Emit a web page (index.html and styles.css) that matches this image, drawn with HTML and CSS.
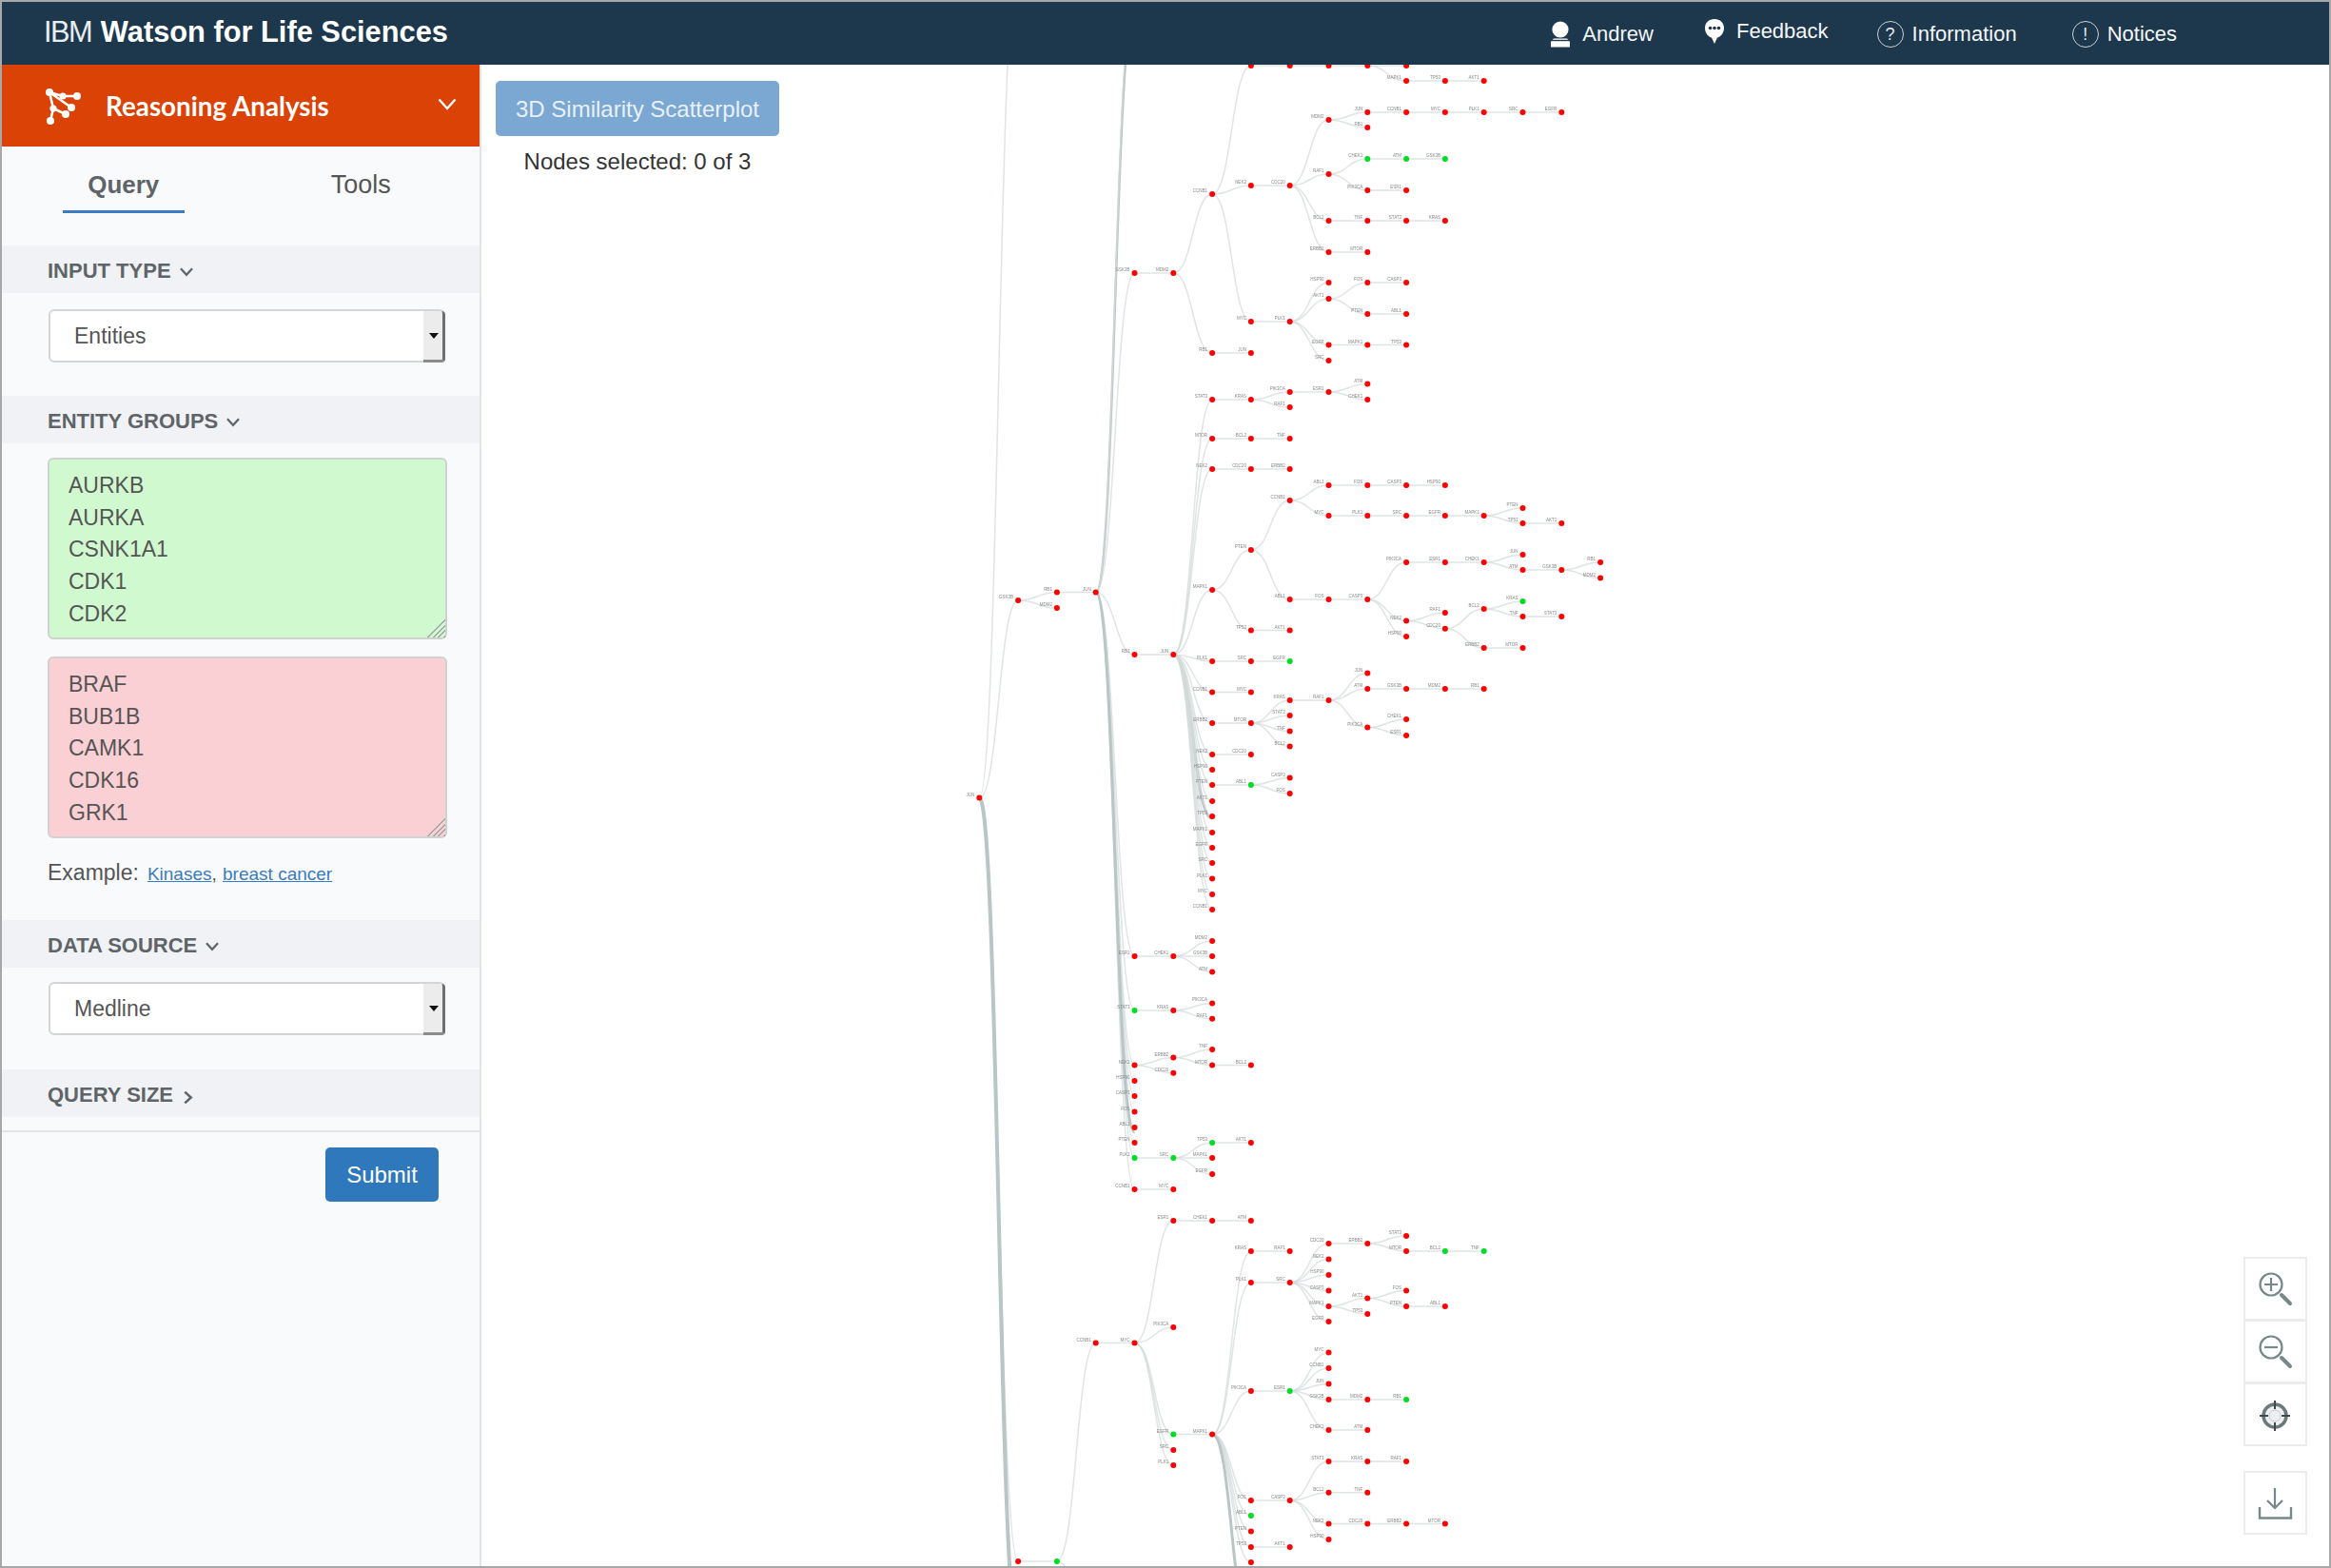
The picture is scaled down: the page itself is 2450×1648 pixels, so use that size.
FILE: index.html
```html
<!DOCTYPE html>
<html lang="en">
<head>
    <meta charset="UTF-8" />
    <title>IBM Watson for Life Sciences - Reasoning Analysis</title>
    <link rel="stylesheet" href="styles.css">
</head>
<body>
<div class="app">
    <header class="topbar">
        <div class="brand"><span class="brand-ibm">IBM</span> <strong>Watson for Life Sciences</strong></div>
        <nav class="topnav">
            <a class="topnav-item" href="#user">
                <svg class="user-icon" viewBox="0 0 22 28"><circle cx="11" cy="9" r="8.6" fill="#fff"/><path d="M4 18.5h14l3 3v6H1v-6z" fill="#fff"/><path d="M1 20.5h20" stroke="#1d374c" stroke-width="1.4"/></svg>
                Andrew
            </a>
            <a class="topnav-item topnav-up" href="#feedback">
                <svg class="bubble-icon" viewBox="0 0 22 28"><path d="M11 1C5 1 1 5 1 10.500S5 20 8 20.500L11 27l3-6.500c3-.5 7-4.500 7-10S17 1 11 1z" fill="#fff"/><circle cx="6.500" cy="10.500" r="1.800" fill="#1d374c"/><circle cx="11" cy="10.500" r="1.800" fill="#1d374c"/><circle cx="15.500" cy="10.500" r="1.800" fill="#1d374c"/></svg>
                Feedback
            </a>
            <a class="topnav-item" href="#info">
                <span class="round-icon">?</span>
                Information
            </a>
            <a class="topnav-item" href="#notices">
                <span class="round-icon">!</span>
                Notices
            </a>
        </nav>
    </header>

    <div class="main">
        <aside class="sidebar">
            <div class="module-head">
                <svg class="module-icon" viewBox="0 0 60 54">
                    <g stroke="#fff" stroke-width="2.600" fill="none"><path d="M16 12L30 16H45M16 12L39 28M16 12L20 29L17 42M20 29L33 35"/></g>
                    <g fill="#fff"><circle cx="16" cy="12" r="4"/><circle cx="30" cy="16" r="3.600"/><circle cx="45" cy="16" r="4"/><circle cx="39" cy="28" r="4"/><circle cx="20" cy="29" r="3.600"/><circle cx="33" cy="35" r="4"/><circle cx="17" cy="42" r="4"/></g>
                </svg>
                <span class="module-title">Reasoning Analysis</span>
                <svg class="module-chevron" viewBox="0 0 20 13"><path d="M1.500 1.500L10 11l8.500-9.500" fill="none" stroke="#fff" stroke-width="2.400"/></svg>
            </div>

            <div class="tabs">
                <div class="tab tab-active"><span>Query</span></div>
                <div class="tab"><span>Tools</span></div>
            </div>

            <div class="band">INPUT TYPE <svg class="band-chevron" viewBox="0 0 14 10"><path d="M1.500 2L7 8l5.500-6" fill="none" stroke="#5e6468" stroke-width="2"/></svg></div>
            <div class="select-row">
                <select class="picker"><option>Entities</option></select>
                <span class="picker-arrow"></span>
            </div>

            <div class="band">ENTITY GROUPS <svg class="band-chevron" viewBox="0 0 14 10"><path d="M1.500 2L7 8l5.500-6" fill="none" stroke="#5e6468" stroke-width="2"/></svg></div>
            <div class="groups">
                <div class="group-box">
                    <textarea class="group group-green" rows="5">AURKB
AURKA
CSNK1A1
CDK1
CDK2</textarea>
                    <span class="grip"></span>
                </div>
                <div class="group-box">
                    <textarea class="group group-red" rows="5">BRAF
BUB1B
CAMK1
CDK16
GRK1</textarea>
                    <span class="grip"></span>
                </div>
                <div class="example">Example: <span class="example-links"><a href="#kinases">Kinases</a>, <a href="#breast">breast cancer</a></span></div>
            </div>

            <div class="band">DATA SOURCE <svg class="band-chevron" viewBox="0 0 14 10"><path d="M1.500 2L7 8l5.500-6" fill="none" stroke="#5e6468" stroke-width="2"/></svg></div>
            <div class="select-row select-row-source">
                <select class="picker"><option>Medline</option></select>
                <span class="picker-arrow"></span>
            </div>

            <div class="band">QUERY SIZE <svg class="band-chevron-right" viewBox="0 0 10 14"><path d="M2 1.500L8 7l-6 5.500" fill="none" stroke="#5e6468" stroke-width="2.400"/></svg></div>

            <div class="submit-row">
                <button class="submit" type="button">Submit</button>
            </div>
        </aside>

        <section class="canvas">
            <svg id="tree" class="tree"></svg>

            <div class="canvas-top">
                <button class="scatter" type="button">3D Similarity Scatterplot</button>
                <div class="selected">Nodes selected: 0 of 3</div>
            </div>

            <div class="zoom-tools">
                <div class="tool">
                    <svg viewBox="0 0 67 66"><circle cx="29" cy="28" r="11.500"/><path d="M29 21v14M22 28h14"/><path class="tool-heavy" d="M40 39l9 9"/></svg>
                </div>
                <div class="tool">
                    <svg viewBox="0 0 67 66"><circle cx="29" cy="28" r="11.500"/><path d="M22 28h14"/><path class="tool-heavy" d="M40 39l9 9"/></svg>
                </div>
                <div class="tool">
                    <svg viewBox="0 0 67 66"><circle class="tool-ring" cx="33" cy="34" r="12"/><circle cx="33" cy="34" r="6" stroke="#c4cccc" stroke-width="1"/><path class="tool-dark" d="M33 18v9M33 41v9M17 34h9M40 34h9"/></svg>
                </div>
                <div class="tool tool-last">
                    <svg viewBox="0 0 67 66"><path d="M33 17v21M25 30l8 8 8-8"/><path d="M17 37v11.500h33V37" stroke-width="2.400"/></svg>
                </div>
            </div>
        </section>
    </div>
</div>
<script src="tree.js"></script>
</body>
</html>
```

FILE: styles.css
```css
* { box-sizing: border-box; }
html, body { margin: 0; height: 100%; }
body { font-family: "Liberation Sans", Arial, sans-serif; font-size: 23px; color: #555; background: #fff; }
a { text-decoration: none; color: inherit; }

.app { height: 100vh; display: flex; flex-direction: column; border: 2px solid #a8a8a8; overflow: hidden; }

/* top bar */
.topbar { flex: 0 0 66px; display: flex; align-items: center; justify-content: space-between; background: #1d374c; color: #fff; padding: 0 160px 2px 44px; }
.brand { font-size: 30.800px; }
.brand-ibm { font-weight: 400; color: #e8edf1; letter-spacing: -1.5px; margin-right: 1px; }
.topnav { display: flex; align-items: center; gap: 55px; margin-top: 4px; }
.topnav-item { display: flex; align-items: center; gap: 12px; font-size: 22px; color: #f4f6f8; }
.topnav-item:first-child { margin-right: -2px; }
.topnav-up { margin: -6px -4px 0 0; }
.topnav-item:last-child { margin-left: 3px; }
.user-icon { width: 22px; height: 28px; }
.bubble-icon { width: 22px; height: 28px; }
.round-icon { width: 28px; height: 28px; border: 1.500px solid #c9d2d9; border-radius: 50%; display: flex; align-items: center; justify-content: center; font-size: 18px; color: #e6ebef; margin-right: -3px; }

.main { flex: 1; display: flex; min-height: 0; }

/* left panel */
.sidebar { flex: 0 0 504px; background: #f9fafc; border-right: 2px solid #e3e4e6; display: flex; flex-direction: column; }
.module-head { flex: 0 0 86px; background: #da4206; display: flex; align-items: center; padding: 0 24px 0 34px; color: #fff; }
.module-icon { width: 60px; height: 54px; margin: 2px 15px 0 0; }
.module-title { flex: 1; font-family: Lato, "Liberation Sans", sans-serif; font-weight: 700; font-size: 27.800px; }
.module-chevron { width: 20px; height: 13px; margin-top: -4px; }

.tabs { flex: 0 0 104px; display: flex; padding-left: 3px; }
.tab { flex: 1; text-align: center; padding-top: 25px; font-size: 27px; color: #555; }
.tab span { display: inline-block; }
.tab-active { color: #5f6468; font-weight: 700; font-size: 26px; }
.tab-active span { width: 128px; height: 45px; border-bottom: 3px solid #3c79c4; }

.band { height: 50px; background: #f0f2f5; display: flex; align-items: center; gap: 8px; padding: 3px 0 0 48px; font-size: 22px; font-weight: 700; color: #5e6468; }
.band-chevron { width: 16px; height: 11px; margin-top: 2px; }
.band-chevron-right { width: 11px; height: 15px; margin: 6px 0 0 2px; }

.select-row { position: relative; margin: 17px 36px 35px 49px; height: 56px; }
.select-row-source { margin-top: 15px; margin-bottom: 36px; }
.picker { width: 100%; height: 100%; appearance: none; -webkit-appearance: none; background: #fff; border: 2px solid #d4d5d6; border-radius: 6px; padding: 0 0 0 25px; font-family: inherit; font-size: 23px; color: #555; }
.picker-arrow { position: absolute; top: 2px; right: 0; bottom: 0; width: 23px; background: #ececec; border-right: 3px solid #6f6f6f; border-bottom: 3px solid #8b8b8b; border-radius: 0 4px 4px 0; }
.picker-arrow::after { content: ""; position: absolute; left: 6px; top: 23px; border: 5px solid transparent; border-top: 6px solid #111; border-bottom: 0; }

.groups { padding: 15px 34px 0 48px; }
.group-box { position: relative; height: 191px; margin-bottom: 18px; }
.group { display: block; width: 100%; height: 100%; padding: 11px 20px; border: 2px solid #cfd2cf; border-radius: 6px; font-family: inherit; font-size: 23px; line-height: 33.700px; color: #555; overflow: hidden; resize: none; }
.group-green { background: #d0f9d0; }
.group-red { background: #fad0d4; }
.grip { position: absolute; right: 2px; bottom: 2px; width: 20px; height: 20px; background: repeating-linear-gradient(135deg, transparent 0 2.500px, #a3a9a6 2.500px 4px); clip-path: polygon(100% 0, 100% 100%, 0 100%); }
.example { display: flex; align-items: baseline; gap: 9px; margin: 22px 0 34px; font-size: 23px; line-height: 28px; }
.example-links { font-size: 19px; }
.example-links a { color: #3a7cc0; text-decoration: underline; }
.example-links a + a { margin-left: 1px; }

.submit-row { margin-top: 14px; border-top: 2px solid #e3e4e6; padding: 16px 43px 0 0; display: flex; justify-content: flex-end; }
.submit { width: 119px; height: 57px; background: #2e78bb; color: #fff; border: none; border-radius: 5px; font-family: inherit; font-size: 24px; }

/* graph area */
.canvas { flex: 1; position: relative; overflow: hidden; background: #fff; }
.tree { position: absolute; left: 0; top: 0; width: 100%; height: 100%; filter: blur(0.5px); }
.link { fill: none; stroke: #d4dbdb; stroke-width: 1.500; stroke-opacity: 0.75; }
.link-heavy { stroke: #b9c6c6; stroke-opacity: 1; }
.node { fill: #f00; }
.node-green { fill: #00dd22; }
.node-label { font-family: "Liberation Sans", Arial, sans-serif; font-size: 4.500px; fill: #888; text-anchor: end; }

.canvas-top { position: absolute; left: 15px; top: 17px; width: 298px; text-align: center; }
.scatter { width: 100%; height: 58px; background: #7ba7d3; color: #e9f0f7; border: none; border-radius: 5px; font-family: inherit; font-size: 24px; padding: 2px 0 0; }
.selected { margin-top: 13px; font-size: 24px; color: #333; line-height: 28px; }

.zoom-tools { position: absolute; right: 23px; bottom: 33px; width: 67px; display: flex; flex-direction: column; }
.tool { height: 67px; background: #fff; border: 2px solid #ececec; margin-top: -1px; }
.tool svg { display: block; width: 67px; height: 66px; margin: -1px -2px; fill: none; stroke: #76888a; stroke-width: 2.200; }
.tool-heavy { stroke-width: 4; stroke-linecap: round; }
.tool-ring { fill: #eef0f0; stroke: #6d7a7c; stroke-width: 3.500; }
.tool-dark { stroke: #3e4a4c; stroke-width: 2; }
.tool-last { margin-top: 26px; }
```

FILE: tree.js
```js
// reasoning tree. y values are page pixels, the column comes from the depth
var COL0 = 1029.3, COL_W = 40.8, OFFSET_X = 506, OFFSET_Y = 68;
var PAGE_H = 1648;

var GENES = ["AKT1", "TP53", "MAPK1", "EGFR", "SRC", "PLK1", "MYC", "CCNB1", "JUN", "RB1", "MDM2", "GSK3B", "ATM", "CHEK1", "ESR1", "PIK3CA", "RAF1", "KRAS", "STAT3", "TNF", "BCL2", "MTOR", "ERBB2", "CDC20", "NEK2", "HSP90", "CASP3", "FOS", "ABL1", "PTEN"];

function n(y) {
    return { y: y, kids: [].slice.call(arguments, 1) };
}
function g(y) {
    var node = n.apply(null, arguments);
    node.green = true;
    return node;
}
// straight run of `len` nodes on the same row, kids hang off the last one
function run(y, len) {
    var node = n.apply(null, [y].concat([].slice.call(arguments, 2)));
    for (var i = 1; i < len; i++) node = n(y, node);
    return node;
}
function grun(y, len) {
    var node = g(y);
    for (var i = 1; i < len; i++) node = g(y, node);
    return node;
}
function heavy(width, node) {
    node.heavy = width;
    return node;
}

var upperBranch = n(287, n(287,
    n(204,
        run(69, 4, n(69), run(85, 3)),
        run(195, 2,
            n(126, run(118, 6), n(134)),
            n(183, grun(167, 3), run(200, 2)),
            run(232, 4),
            run(265, 2)
        ),
        run(338, 2,
            n(297),
            n(314, run(297, 2), run(330, 2)),
            run(362.5, 3),
            n(379)
        )
    ),
    run(371, 2)
));

var middleBranch = n(688, n(688,
    heavy(3, n(860)),
    run(420, 2, n(412, n(412, n(403.6), n(420))), n(428)),
    run(461, 3),
    run(493, 3),
    n(620,
        n(578,
            n(526,
                run(510, 4),
                run(542, 5, n(534), run(550, 2))
            ),
            run(630, 3,
                run(591, 3, n(583), run(599, 2, n(591), n(607.5))),
                n(652.5,
                    n(644),
                    n(660.7,
                        n(640, g(632), run(648, 2)),
                        run(681, 2)
                    )
                ),
                n(669)
            )
        ),
        run(662.5, 2)
    ),
    n(695, n(695, g(695))),
    run(727.5, 2),
    run(760, 2,
        run(736, 2,
            n(707.5),
            run(724, 4),
            n(764.6, n(756), n(773))
        ),
        n(752), n(768.6), n(784.6)
    ),
    run(793, 2),
    n(809),
    n(825, g(825, n(817.5), n(834))),
    n(842), n(858), n(875), n(891), n(907), n(923.6), n(940), n(956)
));

var topColumn = n(622.5, n(622.5,
    heavy(2.5, n(11)),
    n(-5),
    upperBranch,
    middleBranch,
    run(1005, 2, n(989), n(1005), n(1021.5)),
    g(1062, n(1062, n(1054.4), n(1070.7))),
    n(1119.5,
        n(1111.5, n(1103), run(1119.5, 2)),
        n(1127.8)
    ),
    n(1136), n(1152), n(1168.6), n(1185),
    n(1201),
    g(1217, g(1217, g(1201, n(1201)), n(1217), n(1234))),
    run(1250, 2),
    heavy(3, n(1190))
));

var bottomRight = n(1507.6,
    run(1315, 2),
    run(1348, 2,
        n(1307, n(1307, n(1299), run(1315, 1, grun(1315, 2)))),
        n(1323.6), n(1340), n(1356.6),
        n(1373,
            n(1364.5, n(1356.6), run(1373, 2)),
            n(1381)
        ),
        n(1389)
    ),
    n(1462, g(1462,
        n(1421.6), n(1438), n(1454.5),
        n(1471, n(1471, g(1471))),
        run(1503, 2)
    )),
    run(1577, 2,
        run(1536, 3),
        run(1568.7, 2),
        run(1601.6, 4),
        n(1618)
    ),
    g(1593),
    n(1609.5),
    run(1626, 2),
    n(1642),
    heavy(3, n(1710))
);

var bottomBranch = n(1641, g(1641,
    n(1411.5, n(1411.5,
        run(1283, 3),
        n(1395),
        g(1507.6, bottomRight),
        n(1524),
        n(1540)
    )),
    n(1720)
));

var data = n(838.5,
    n(-46),
    n(631, topColumn, n(639)),
    bottomBranch,
    heavy(4, n(1716))
);

var svg = document.getElementById("tree");
var NS = "http://www.w3.org/2000/svg";
var linksLayer = document.createElementNS(NS, "g");
var labelsLayer = document.createElementNS(NS, "g");
var nodesLayer = document.createElementNS(NS, "g");
svg.appendChild(linksLayer);
svg.appendChild(labelsLayer);
svg.appendChild(nodesLayer);

var count = 0;

function draw(node, depth) {
    var x = COL0 + depth * COL_W - OFFSET_X;
    var y = node.y - OFFSET_Y;

    node.kids.forEach(function (kid) {
        var x2 = x + COL_W, y2 = kid.y - OFFSET_Y, mid = (x + x2) / 2;
        var path = document.createElementNS(NS, "path");
        path.setAttribute("d", "M" + x + "," + y + "C" + mid + "," + y + " " + mid + "," + y2 + " " + x2 + "," + y2);
        path.setAttribute("class", kid.heavy ? "link link-heavy" : "link");
        if (kid.heavy) path.style.strokeWidth = kid.heavy + "px";
        linksLayer.appendChild(path);
        draw(kid, depth + 1);
    });

    // no dot past the top edge, no label where the canvas edge would cut it
    if (y < -4 || kid_is_link_end(node)) return;
    if (y >= 6 && node.y < PAGE_H - 14) {
        var label = document.createElementNS(NS, "text");
        label.setAttribute("class", "node-label");
        label.setAttribute("x", x - 5);
        label.setAttribute("y", y - 2);
        label.textContent = GENES[count++ % GENES.length];
        labelsLayer.appendChild(label);
    }

    var dot = document.createElementNS(NS, "circle");
    dot.setAttribute("class", node.green ? "node node-green" : "node");
    dot.setAttribute("cx", x);
    dot.setAttribute("cy", y);
    dot.setAttribute("r", 3);
    nodesLayer.appendChild(dot);
}

// heavy links stand in for a bundle of edges, they have no node of their own
function kid_is_link_end(node) {
    return !!node.heavy;
}

draw(data, 0);
```
